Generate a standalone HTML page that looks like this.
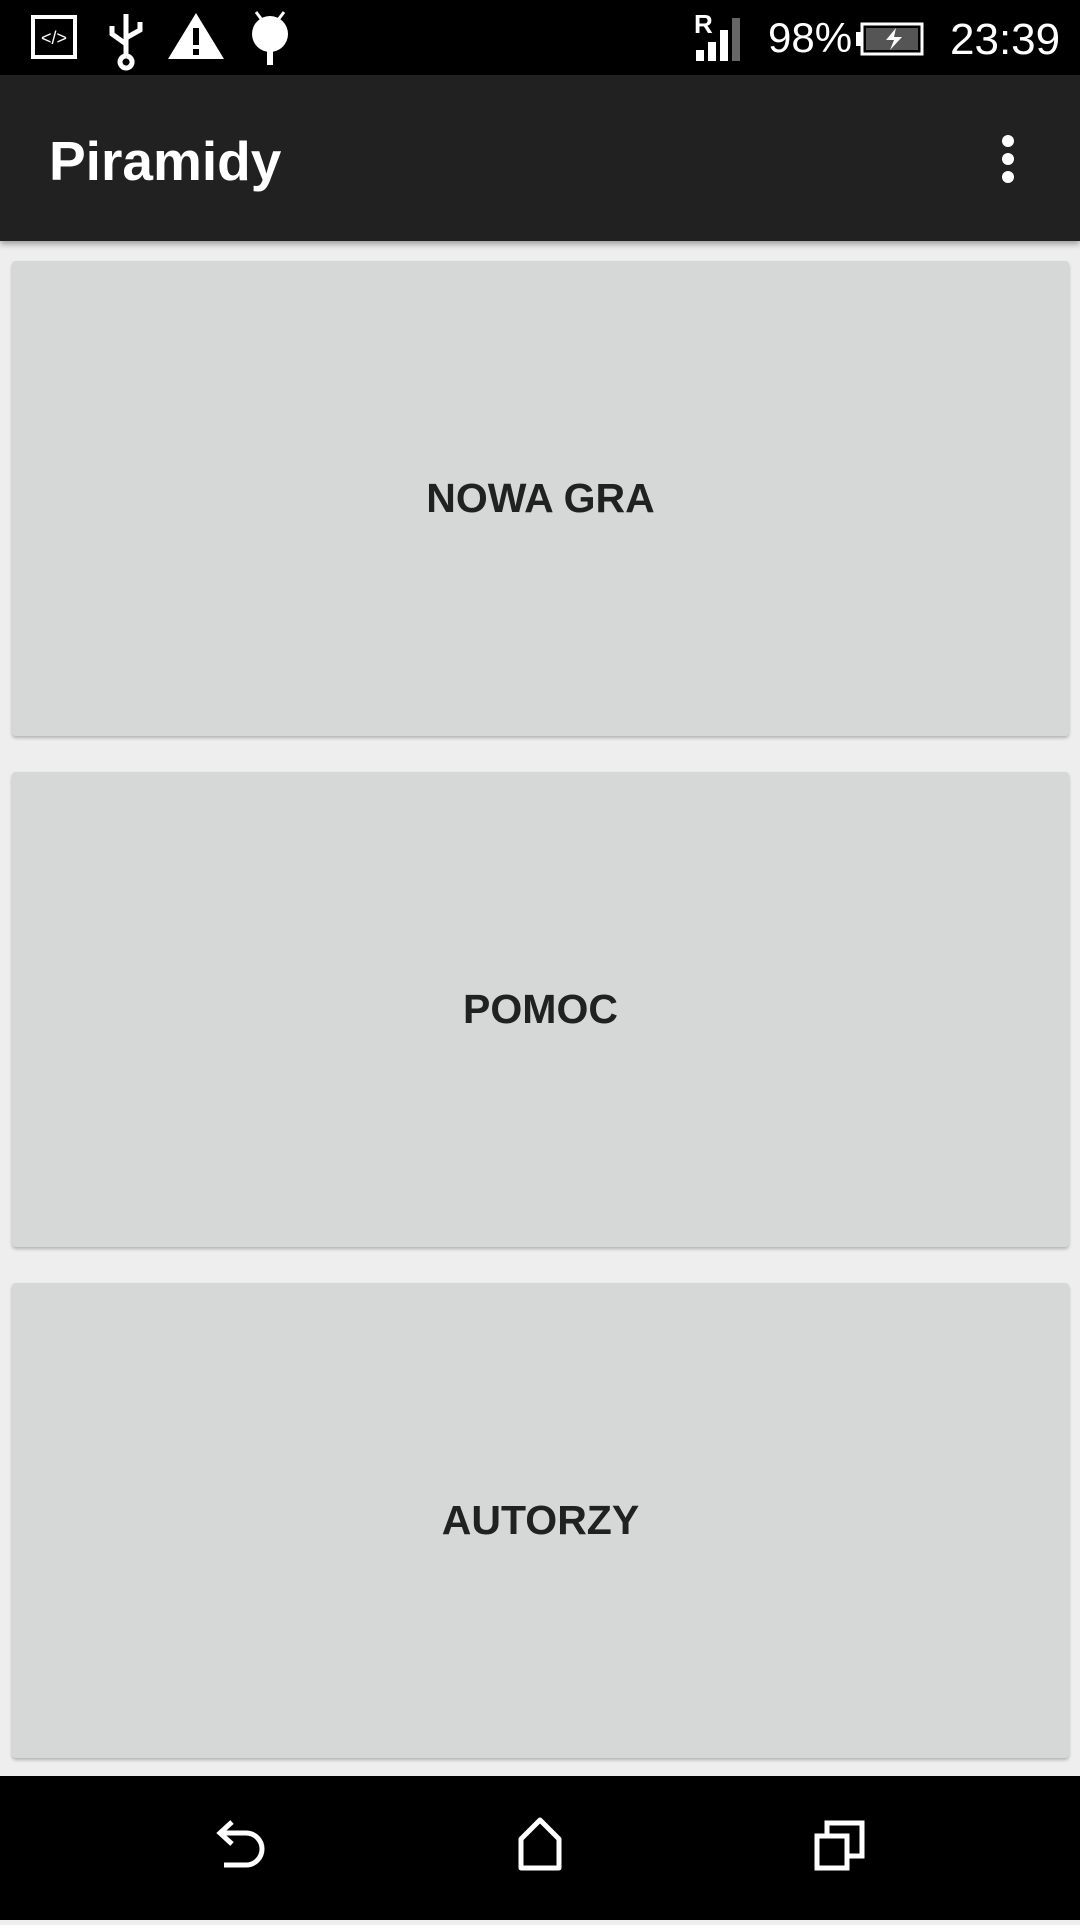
<!DOCTYPE html>
<html><head><meta charset="utf-8"><style>
*{margin:0;padding:0;box-sizing:border-box}
body{width:1080px;height:1920px;background:#eeeeee;position:relative;overflow:hidden;font-family:"Liberation Sans",sans-serif}
.status{position:absolute;left:0;top:0;width:1080px;height:75px;background:#000;color:#fff}
.appbar{position:absolute;left:0;top:75px;width:1080px;height:166px;background:#212121;box-shadow:0 3px 6px rgba(0,0,0,.35)}
.title{position:absolute;left:49px;top:54px;font-size:55px;color:#fff;font-weight:bold}
.btn{position:absolute;left:12px;width:1057px;height:475px;background:#d6d7d7;border-radius:4px;box-shadow:0 2px 3px rgba(0,0,0,.25);display:flex;align-items:center;justify-content:center;font-size:41px;font-weight:bold;color:#212121;letter-spacing:0}
.nav{position:absolute;left:0;top:1776px;width:1080px;height:144px;background:#000}
</style></head><body>
<div class="status">
 <svg width="1080" height="75" style="position:absolute;left:0;top:0">
  <rect x="33" y="17" width="42" height="40" fill="none" stroke="#fff" stroke-width="4"/>
  <text x="54" y="44" font-size="18" fill="#fff" text-anchor="middle" font-family="Liberation Sans">&lt;/&gt;</text>
  <path d="M126 14v42M126 56a6 6 0 1 0 0.1 0M126 44l-14-10v-8M126 38l14-8v-8" stroke="#fff" stroke-width="5" fill="none"/>
  <path d="M196 13l28 46h-56z" fill="#fff"/>
  <rect x="193" y="28" width="6" height="17" fill="#000"/><rect x="193" y="49" width="6" height="6" fill="#000"/>
  <circle cx="270" cy="34" r="18" fill="#fff"/><rect x="267" y="48" width="6" height="17" fill="#fff"/>
  <path d="M256 12l6 8M284 12l-6 8" stroke="#fff" stroke-width="3"/>
  <text x="694" y="33" font-size="26" font-weight="bold" fill="#fff" font-family="Liberation Sans">R</text>
  <rect x="696" y="50" width="8" height="11" fill="#fff"/><rect x="708" y="42" width="8" height="19" fill="#fff"/>
  <rect x="720" y="30" width="8" height="31" fill="#fff"/><rect x="732" y="18" width="8" height="43" fill="#666"/>
  <text x="768" y="52" font-size="42" fill="#fff" font-family="Liberation Sans">98%</text>
  <rect x="862" y="24" width="60" height="30" fill="none" stroke="#fff" stroke-width="3"/>
  <rect x="856" y="32" width="6" height="14" fill="#fff"/>
  <rect x="866" y="28" width="52" height="22" fill="#555"/>
  <path d="M896 28l-10 12h8l-4 10 12-13h-8z" fill="#fff"/>
  <text x="950" y="54" font-size="44" fill="#fff" font-family="Liberation Sans">23:39</text>
 </svg>
</div>
<div class="appbar"><div class="title">Piramidy</div>
 <svg width="20" height="60" style="position:absolute;left:998px;top:58px"><circle cx="10" cy="8" r="6" fill="#fff"/><circle cx="10" cy="26" r="6" fill="#fff"/><circle cx="10" cy="44" r="6" fill="#fff"/></svg>
</div>
<div class="btn" style="top:261px">NOWA GRA</div>
<div class="btn" style="top:772px">POMOC</div>
<div class="btn" style="top:1283px">AUTORZY</div>
<div class="nav">
 <svg width="1080" height="144">
  <path d="M222 57h24a16 16 0 0 1 0 32h-22M232 46l-12 11 12 11" stroke="#fff" stroke-width="5" fill="none"/>
  <path d="M521 92V63l19-19 19 19v29z" stroke="#fff" stroke-width="5" fill="none" stroke-linejoin="round"/>
  <rect x="817" y="60" width="30" height="32" stroke="#fff" stroke-width="5" fill="none"/>
  <path d="M827 58v-11h35v33h-13" stroke="#fff" stroke-width="5" fill="none"/>
 </svg>
</div>
</body></html>
